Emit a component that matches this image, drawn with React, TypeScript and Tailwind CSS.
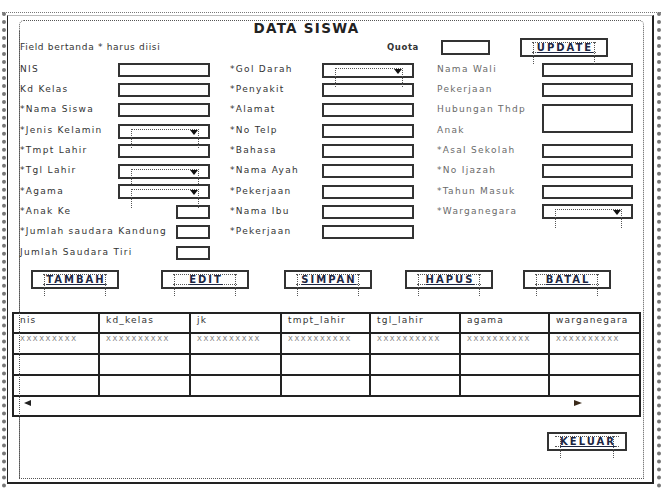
const labelDark = "text-[#333]";
const labelLight = "text-[#6a6a6a]";

type Field = "input" | "select" | "small" | "tall" | "none";

type Row = {
  l1: string;
  f1: Field;
  l2: string;
  f2: Field;
  l3?: string;
  f3?: Field;
};

const rows: Row[] = [
  { l1: "NIS", f1: "input", l2: "*Gol Darah", f2: "select", l3: "Nama Wali", f3: "input" },
  { l1: "Kd Kelas", f1: "input", l2: "*Penyakit", f2: "input", l3: "Pekerjaan", f3: "input" },
  { l1: "*Nama Siswa", f1: "input", l2: "*Alamat", f2: "input", l3: "Hubungan Thdp", f3: "tall" },
  { l1: "*Jenis Kelamin", f1: "select", l2: "*No Telp", f2: "input", l3: "Anak" },
  { l1: "*Tmpt Lahir", f1: "input", l2: "*Bahasa", f2: "input", l3: "*Asal Sekolah", f3: "input" },
  { l1: "*Tgl Lahir", f1: "select", l2: "*Nama Ayah", f2: "input", l3: "*No Ijazah", f3: "input" },
  { l1: "*Agama", f1: "select", l2: "*Pekerjaan", f2: "input", l3: "*Tahun Masuk", f3: "input" },
  { l1: "*Anak Ke", f1: "small", l2: "*Nama Ibu", f2: "input", l3: "*Warganegara", f3: "select" },
  { l1: "*Jumlah saudara Kandung", f1: "small", l2: "*Pekerjaan", f2: "input", l3: "", f3: "none" },
  { l1: "Jumlah Saudara Tiri", f1: "small", l2: "", f2: "none", l3: "", f3: "none" },
];

const columns = [
  { name: "nis", w: "w-[86px]", xs: "XXXXXXXXX" },
  { name: "kd_kelas", w: "w-[91px]", xs: "XXXXXXXXXX" },
  { name: "jk", w: "w-[91px]", xs: "XXXXXXXXXX" },
  { name: "tmpt_lahir", w: "w-[89px]", xs: "XXXXXXXXXX" },
  { name: "tgl_lahir", w: "w-[90px]", xs: "XXXXXXXXXX" },
  { name: "agama", w: "w-[89px]", xs: "XXXXXXXXXX" },
  { name: "warganegara", w: "flex-1", xs: "XXXXXXXXXX" },
];

function TextBox({ className = "w-[92px] h-[14px]" }: { className?: string }) {
  return <div className={`${className} border-2 border-[#333] bg-white`} />;
}

function Combo() {
  return (
    <div className="relative h-[15px] w-[92px] border-2 border-[#333] bg-white">
      <div className="absolute left-[11px] right-[9px] top-[3px] h-[19px] border-x border-t border-dotted border-[#555]" />
      <div className="absolute right-[10px] top-[4px] h-0 w-0 border-x-[4px] border-t-[5px] border-x-transparent border-t-[#111]" />
    </div>
  );
}

function FieldCell({ kind }: { kind?: Field }) {
  if (kind === "input") return <div className="flex items-center"><TextBox /></div>;
  if (kind === "select") return <div className="flex items-center"><Combo /></div>;
  if (kind === "small")
    return (
      <div className="flex items-center justify-end">
        <TextBox className="w-[34px] h-[14px]" />
      </div>
    );
  if (kind === "tall")
    return (
      <div className="row-span-2 pt-[5px]">
        <TextBox className="w-[91px] h-[29px]" />
      </div>
    );
  return <div />;
}

function Label({ text, tone }: { text?: string; tone: string }) {
  return (
    <div className={`flex items-center whitespace-nowrap text-[9px] tracking-[1.3px] ${tone}`}>{text}</div>
  );
}

function Btn({ label, size = "w-[88px]", className = "" }: { label: string; size?: string; className?: string }) {
  return (
    <div className={`relative flex h-[19px] ${size} shrink-0 justify-center border-2 border-[#333] bg-white ${className}`}>
      <div className="absolute left-[11px] right-[11px] top-[2px] h-[22px] border-x border-dotted border-[#555]" />
      <div className="mt-[2px] flex h-[11px] w-[64px] items-center justify-center border-y border-dotted border-[#555]">
        <span className="pl-[2px] text-[10px] font-bold leading-[10px] tracking-[2px] text-[#1c2541] underline decoration-[#1c2541]">
          {label}
        </span>
      </div>
    </div>
  );
}

export default function App() {
  return (
    <div className="h-[490px] w-[663px] overflow-hidden bg-white pl-[2px] pt-[12px] font-['DejaVu_Sans',sans-serif]">
      <div className="h-[476px] w-[659px] border-x-[4px] border-t border-dotted border-[#777]">
        <div className="ml-[1px] mt-[2px] h-[469px] w-[647px] border-l border-t border-r-2 border-b-2 border-l-[#222] border-t-[#bbb] border-r-[#222] border-b-[#222]">
          <div className="relative ml-[11px] mt-[4px] h-[459px] w-[625px] rounded-t-[5px] border border-dotted border-[#555]">
            {/* title */}
            <div className="h-[14px] pr-[50px] text-center text-[13.5px] font-bold leading-[14px] tracking-[1.3px] text-[#222]">
              DATA SISWA
            </div>

            {/* note, quota, update */}
            <div className="flex h-[25px] items-center">
              <div className="w-[367px] text-[9px] tracking-[0.7px] text-[#333]">Field bertanda * harus diisi</div>
              <div className="w-[54px] text-[8.5px] font-bold tracking-[0.6px] text-[#333]">Quota</div>
              <TextBox className="w-[49px] h-[15px]" />
              <Btn label="UPDATE" className="ml-[30px]" />
            </div>

            {/* form fields */}
            <div className="grid grid-cols-[98px_92px_20px_92px_92px_23px_105px_91px] grid-rows-[20px_19px_22px_20px_20px_20px_21px_19px_22px_20px]">
              {rows.map((r, i) => (
                <>
                  <Label key={`a${i}`} text={r.l1} tone={labelDark} />
                  <FieldCell key={`b${i}`} kind={r.f1} />
                  <div key={`c${i}`} />
                  <Label key={`d${i}`} text={r.l2} tone={labelDark} />
                  <FieldCell key={`e${i}`} kind={r.f2} />
                  <div key={`f${i}`} />
                  <Label key={`g${i}`} text={r.l3} tone={labelLight} />
                  {r.f3 && <FieldCell key={`h${i}`} kind={r.f3} />}
                </>
              ))}
            </div>

            {/* action buttons */}
            <div className="mt-[7px] flex">
              <Btn label="TAMBAH" className="ml-[11px]" />
              <Btn label="EDIT" className="ml-[42px]" />
              <Btn label="SIMPAN" className="ml-[35px]" />
              <Btn label="HAPUS" className="ml-[33px]" />
              <Btn label="BATAL" className="ml-[30px]" />
            </div>

            {/* data grid */}
            <div className="ml-[-8px] mt-[23px] w-[629px] border-2 border-[#222] bg-white">
              <div className="flex h-[20px] border-b-2 border-[#222]">
                {columns.map((c, i) => (
                  <div
                    key={c.name}
                    className={`${c.w} ${i < 6 ? "border-r-2 border-[#222]" : ""} pl-[6px] text-[9px] leading-[13px] tracking-[1.2px] text-[#333]`}
                  >
                    {c.name}
                  </div>
                ))}
              </div>
              {[0, 1, 2].map((r) => (
                <div key={r} className="flex h-[21px] border-b-2 border-[#222]">
                  {columns.map((c, i) => (
                    <div
                      key={c.name}
                      className={`${c.w} ${i < 6 ? "border-r-2 border-[#222]" : ""} pl-[6px] text-[7px] leading-[11px] tracking-[1.6px] text-[#777]`}
                    >
                      {r === 0 ? c.xs : ""}
                    </div>
                  ))}
                </div>
              ))}
              <div className="flex h-[18px] items-start pt-[3px]">
                <div className="ml-[10px] h-0 w-0 border-y-[3px] border-r-[7px] border-y-transparent border-r-[#222]" />
                <div className="ml-[543px] h-0 w-0 border-y-[3px] border-l-[8px] border-y-transparent border-l-[#3a2a1a]" />
              </div>
            </div>

            {/* exit */}
            <div className="mt-[15px] flex justify-end pr-[16px]">
              <Btn label="KELUAR" size="w-[80px]" />
            </div>

            {/* frame edge runs over the grid */}
            <div className="pointer-events-none absolute bottom-0 left-[-1px] top-[10px] border-l border-dotted border-[#555]" />
          </div>
        </div>
      </div>
    </div>
  );
}
